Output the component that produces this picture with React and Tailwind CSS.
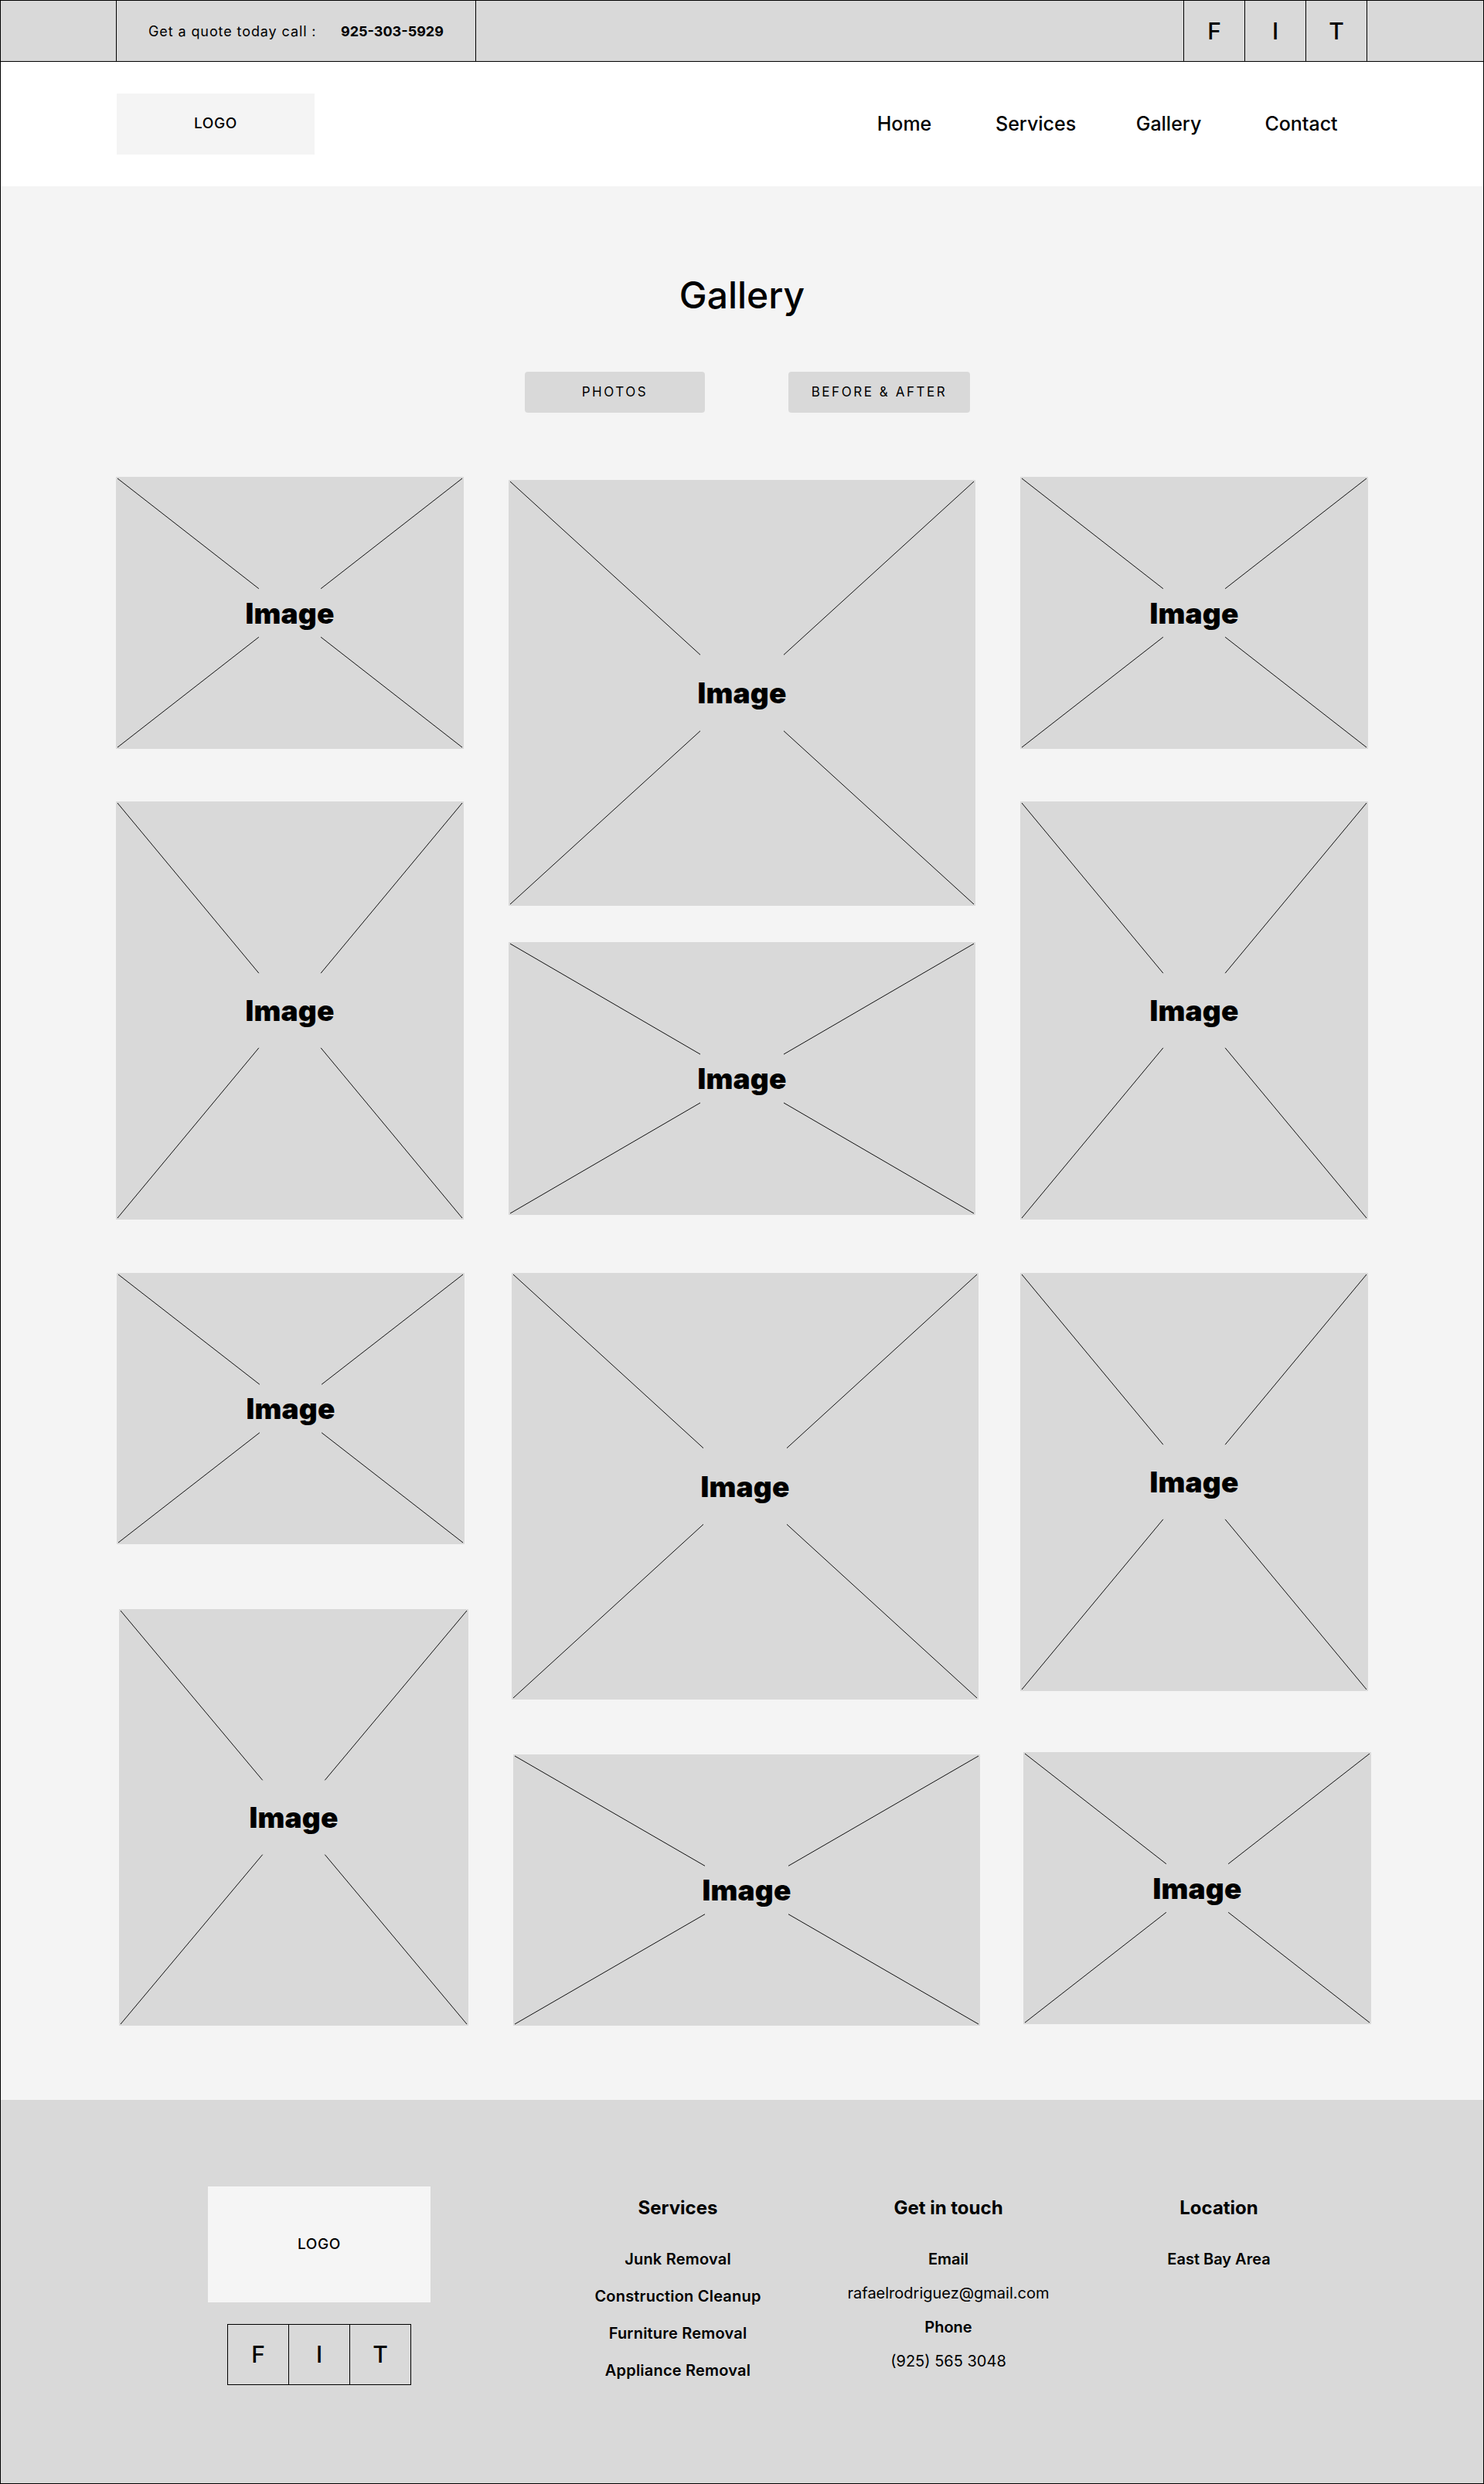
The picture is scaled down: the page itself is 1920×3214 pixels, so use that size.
const columns = [
  {
    cls: "w-[450px]",
    items: [
      { w: 450, h: 352, cls: "w-[450px] h-[352px]" },
      { w: 450, h: 541, cls: "mt-[68px] w-[450px] h-[541px]" },
      { w: 450, h: 351, cls: "mt-[69px] ml-[1px] w-[450px] h-[351px]" },
      { w: 452, h: 539, cls: "mt-[84px] ml-[4px] w-[452px] h-[539px]" },
    ],
  },
  {
    cls: "mt-[4px] w-[604px]",
    items: [
      { w: 604, h: 551, cls: "w-[604px] h-[551px]" },
      { w: 604, h: 353, cls: "mt-[47px] w-[604px] h-[353px]" },
      { w: 604, h: 552, cls: "mt-[75px] ml-[4px] w-[604px] h-[552px]" },
      { w: 604, h: 351, cls: "mt-[71px] ml-[6px] w-[604px] h-[351px]" },
    ],
  },
  {
    cls: "w-[450px]",
    items: [
      { w: 450, h: 352, cls: "w-[450px] h-[352px]" },
      { w: 450, h: 541, cls: "mt-[68px] w-[450px] h-[541px]" },
      { w: 450, h: 541, cls: "mt-[69px] w-[450px] h-[541px]" },
      { w: 450, h: 352, cls: "mt-[79px] ml-[4px] w-[450px] h-[352px]" },
    ],
  },
];

const services = [
  "Junk Removal",
  "Construction Cleanup",
  "Furniture Removal",
  "Appliance Removal",
];

// grey box with a broken X, like a wireframe image slot
function Placeholder({ w, h, className }) {
  const f = 0.82;
  const cx = w / 2;
  const cy = h / 2;
  const corners = [
    [2, 2],
    [w - 2, 2],
    [2, h - 2],
    [w - 2, h - 2],
  ];

  return (
    <div
      className={`relative flex shrink-0 items-center justify-center bg-[#d9d9d9] ${className}`}
    >
      <svg
        className="absolute inset-0"
        width={w}
        height={h}
        viewBox={`0 0 ${w} ${h}`}
      >
        {corners.map(([x, y], i) => (
          <line
            key={i}
            x1={x}
            y1={y}
            x2={x + (cx - x) * f}
            y2={y + (cy - y) * f}
            stroke="#111"
            strokeWidth="1"
          />
        ))}
      </svg>
      <span className="relative text-[37px] font-black leading-none tracking-[0.005em]">
        Image
      </span>
    </div>
  );
}

function TopBar() {
  return (
    <div className="flex h-[79px] border-b border-black bg-[#d9d9d9]">
      <div className="w-[150px] border-r border-black" />
      <div className="flex w-[465px] items-center border-r border-black pl-[41px] text-[18px]">
        <span className="w-[249px] tracking-[0.05em]">Get a quote today call :</span>
        <span className="font-bold">925-303-5929</span>
      </div>
      <div className="flex-1" />
      <div className="flex text-[30px] font-medium">
        <div className="flex w-[79px] items-center justify-center border-l border-black">
          F
        </div>
        <div className="flex w-[79px] items-center justify-center border-l border-black">
          I
        </div>
        <div className="flex w-[80px] items-center justify-center border-x border-black">
          T
        </div>
      </div>
      <div className="w-[150px]" />
    </div>
  );
}

function Header() {
  return (
    <header className="flex h-[161px] items-center bg-white pl-[150px] text-[25px] font-medium">
      <div className="flex h-[79px] w-[256px] items-center justify-center bg-[#f4f4f4] text-[19px] tracking-[0.03em]">
        LOGO
      </div>
      <a className="ml-[726px] w-[74px] text-center">Home</a>
      <a className="ml-[81px] w-[102px] text-center">Services</a>
      <a className="ml-[79px] w-[86px] text-center">Gallery</a>
      <a className="ml-[79px] w-[99px] text-center">Contact</a>
    </header>
  );
}

function Footer() {
  return (
    <footer className="flex h-[496px] bg-[#d9d9d9] pl-[268px] pt-[112px]">
      <div className="flex w-[288px] flex-col items-center">
        <div className="flex h-[150px] w-[288px] items-center justify-center bg-[#f5f5f5] text-[19px] font-medium tracking-[0.03em]">
          LOGO
        </div>
        <div className="mt-[28px] flex h-[79px] border border-black text-[30px] font-medium">
          <div className="flex w-[78px] items-center justify-center">F</div>
          <div className="flex w-[79px] items-center justify-center border-l border-black">
            I
          </div>
          <div className="flex w-[79px] items-center justify-center border-l border-black">
            T
          </div>
        </div>
      </div>

      <div className="ml-[145px] flex pt-[16px] text-center">
        <div className="w-[350px]">
          <h3 className="text-[24px] font-bold leading-none">Services</h3>
          <ul className="mt-[30px] text-[20px] font-semibold leading-[48px] tracking-[0.01em]">
            {services.map((s) => (
              <li key={s}>{s}</li>
            ))}
          </ul>
        </div>

        <div className="w-[350px]">
          <h3 className="text-[24px] font-bold leading-none">Get in touch</h3>
          <div className="mt-[32px] text-[20px] leading-[44px]">
            <p className="font-semibold">Email</p>
            <p>rafaelrodriguez@gmail.com</p>
            <p className="font-semibold">Phone</p>
            <p>(925) 565 3048</p>
          </div>
        </div>

        <div className="w-[350px]">
          <h3 className="text-[24px] font-bold leading-none">Location</h3>
          <p className="mt-[32px] text-[20px] font-semibold leading-[44px]">
            East Bay Area
          </p>
        </div>
      </div>
    </footer>
  );
}

export default function App() {
  return (
    <div className="w-full border border-black font-['Inter',sans-serif] text-black">
      <TopBar />
      <Header />

      <main className="bg-[#f4f4f4] pb-[96px] pt-[117px]">
        <h1 className="text-center text-[48px] font-medium leading-none">
          Gallery
        </h1>

        <div className="mt-[75px] flex gap-[108px] pl-[678px] text-[17px] tracking-[0.15em]">
          <button className="h-[53px] w-[233px] rounded-[4px] bg-[#d9d9d9]">
            PHOTOS
          </button>
          <button className="h-[53px] w-[235px] rounded-[4px] bg-[#d9d9d9]">
            BEFORE &amp; AFTER
          </button>
        </div>

        {/* Grid */}
        <div className="mt-[83px] flex items-start gap-[58px] pl-[149px]">
          {columns.map((col, i) => (
            <div key={i} className={`flex flex-col ${col.cls}`}>
              {col.items.map((it, j) => (
                <Placeholder key={j} w={it.w} h={it.h} className={it.cls} />
              ))}
            </div>
          ))}
        </div>
      </main>

      <Footer />
    </div>
  );
}
